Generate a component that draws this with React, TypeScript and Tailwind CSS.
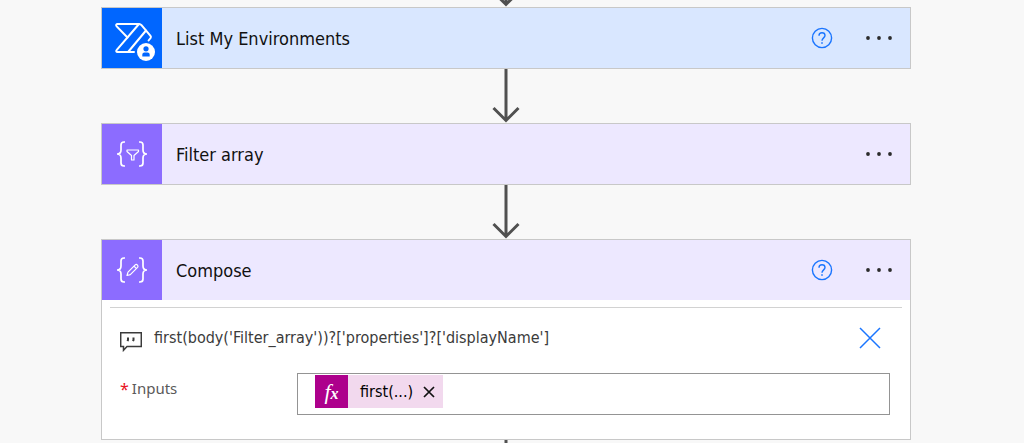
import type { ReactNode } from 'react';

type Tone = 'blue' | 'violet';

const TONES: Record<Tone, { header: string; tile: string }> = {
  blue: { header: 'bg-[#d9e7ff]', tile: 'bg-[#0066ff]' },
  violet: { header: 'bg-[#ede8ff]', tile: 'bg-[#8c6cff]' },
};

function EnvironmentsIcon() {
  return (
    <svg width="60" height="60" viewBox="0 0 60 60" fill="none" aria-hidden="true">
      <g stroke="#fff" strokeWidth="2" strokeLinejoin="round" strokeLinecap="round">
        <path d="M15.5 16H37Q38.5 16 39.5 17.2L48.5 27.8Q49.3 28.8 48.6 30L46.6 32.5" />
        <path d="M15.5 16C14 16 13.8 17.4 14.7 18.4L25.5 29.5" />
        <path d="M37 16L14.8 41.8C13.8 43 14.2 44 15.5 44H32" />
        <path d="M44 22.5L26.5 43.5" />
      </g>
      <circle cx="44" cy="44" r="10" fill="#0066ff" />
      <circle cx="44" cy="44" r="9" fill="#fff" />
      <circle cx="44" cy="40.8" r="2.6" fill="#0066ff" />
      <path d="M40.3 48.4V46.6a2.2 2.2 0 0 1 2.2-2.2h3a2.2 2.2 0 0 1 2.2 2.2v1.8z" fill="#0066ff" />
    </svg>
  );
}

function BracesIcon({ children }: { children: ReactNode }) {
  return (
    <svg width="60" height="60" viewBox="0 0 60 60" fill="none" stroke="#fff" aria-hidden="true">
      <path
        strokeWidth="1.7"
        d="M23 18H22Q19 18 19 21V26Q19 30 15 30Q19 30 19 34V39Q19 42 22 42H23M37 18H38Q41 18 41 21V26Q41 30 45 30Q41 30 41 34V39Q41 42 38 42H37"
      />
      {children}
    </svg>
  );
}

function FilterIcon() {
  return (
    <BracesIcon>
      <path strokeWidth="1.2" strokeLinejoin="round" d="M25 26H36.5V27.5L32 31.5V36H29.5V31.5L25 27.5Z" />
    </BracesIcon>
  );
}

function ComposeIcon() {
  return (
    <BracesIcon>
      <path
        strokeWidth="1.2"
        strokeLinejoin="round"
        d="M25 35.5L26 32.2L33.2 24.9Q34.3 24 35.5 25.1Q36.5 26.2 35.6 27.4L28.3 34.6ZM32 26.2L34.3 28.5"
      />
    </BracesIcon>
  );
}

function Arrow() {
  return (
    <svg
      className="shrink-0"
      width="28"
      height="54"
      viewBox="0 0 28 54"
      fill="none"
      stroke="#505050"
      strokeWidth="3"
      aria-hidden="true"
    >
      <path d="M14 0V51.5M1.5 39L14 51.5L26.5 39" />
    </svg>
  );
}

function HelpButton() {
  return (
    <button type="button" aria-label="Help" className="mr-8">
      <svg width="22" height="22" viewBox="0 0 22 22" fill="none" stroke="#1a75ff" strokeWidth="1.4">
        <circle cx="11" cy="11" r="9.6" />
        <path d="M8 8.8C8 6.8 9.2 5.8 11 5.8S14 6.9 14 8.5C14 10.8 11 11 11 13.8" />
        <path d="M11 15.2V16.8" strokeWidth="1.6" />
      </svg>
    </button>
  );
}

function MenuButton() {
  return (
    <button type="button" aria-label="Menu" className="mr-[17px]">
      <svg width="28" height="22" viewBox="0 0 28 22" fill="#2b2b2b">
        <circle cx="3" cy="11" r="1.9" />
        <circle cx="14" cy="11" r="1.9" />
        <circle cx="25" cy="11" r="1.9" />
      </svg>
    </button>
  );
}

function StepCard({
  title,
  tone,
  icon,
  help = false,
  children,
}: {
  title: string;
  tone: Tone;
  icon: ReactNode;
  help?: boolean;
  children?: ReactNode;
}) {
  return (
    <section className="w-full shrink-0 border border-[#c8c8c8] bg-white">
      <header className={`flex h-[60px] items-center ${TONES[tone].header}`}>
        <div className={`size-[60px] ${TONES[tone].tile}`}>{icon}</div>
        <h2 className="ml-3.5 flex-1 text-[18px] text-[#111]">{title}</h2>
        {help && <HelpButton />}
        <MenuButton />
      </header>
      {children}
    </section>
  );
}

function ExpressionToken() {
  return (
    <span className="flex h-[33px] shrink-0 items-center bg-[#f2d9ee] text-[16px] text-black">
      <span className="flex size-[33px] items-center justify-center bg-[#ad008c] font-['Liberation_Serif',serif] text-white italic">
        <span className="text-[22px] leading-6">f</span>
        <span className="pt-1 text-[16px] leading-6 font-bold">x</span>
      </span>
      <span className="ml-3">first(...)</span>
      <button type="button" aria-label="Remove first(...)" className="mr-2 ml-2.5">
        <svg width="12" height="12" viewBox="0 0 12 12" stroke="#111" strokeWidth="1.7">
          <path d="M1 1L11 11M11 1L1 11" />
        </svg>
      </button>
    </span>
  );
}

function ComposeBody() {
  return (
    <div className="px-2 pt-[7px] pb-6">
      <hr className="border-[#d2d2d2]" />
      <div className="flex h-[60px] items-center pr-[21px] pl-2">
        <svg className="mt-2 ml-0.5" width="22" height="20" viewBox="0 0 22 20" fill="none" stroke="#3b3b3b" strokeWidth="1.5" aria-hidden="true">
          <path d="M.7 .7H21.3V14.5H7L3.5 18.3V14.5H.7Z" />
          <path strokeWidth="2" d="M8 5.5V8L7.5 9.2M13.5 5.5V8L13 9.2" />
        </svg>
        <p className="ml-3 flex-1 text-[16px] text-[#3b3b3b]">
          first(body('Filter_array'))?['properties']?['displayName']
        </p>
        <button type="button" aria-label="Delete comment">
          <svg width="22" height="22" viewBox="0 0 22 22" stroke="#1a75ff" strokeWidth="1.5">
            <path d="M1 1L21 21M21 1L1 21" />
          </svg>
        </button>
      </div>
      <div className="mt-[5px] flex items-start pr-3 pl-2">
        <label
          htmlFor="inputs"
          className="mt-1 flex w-[179px] shrink-0 gap-[3px] pl-0.5 font-['Noto_Sans',sans-serif] text-[15px] text-[#5a5a5a]"
        >
          <span className="text-[16px] text-[#e81123]">*</span>
          Inputs
        </label>
        <div className="flex h-[42px] flex-1 items-start border border-[#949494] pt-px pr-2 pl-[17px]">
          <ExpressionToken />
          <input id="inputs" type="text" className="h-9 min-w-0 flex-1 px-2 outline-none" />
        </div>
      </div>
    </div>
  );
}

export default function App() {
  return (
    <main className="flex h-screen justify-center overflow-hidden bg-[#f8f8f8] pr-3 font-['DejaVu_Sans_Condensed','Noto_Sans',sans-serif]">
      <div className="flex w-full max-w-[810px] flex-col items-center">
        <div className="flex h-[7px] shrink-0 flex-col justify-end overflow-hidden">
          <Arrow />
        </div>
        <StepCard title="List My Environments" tone="blue" icon={<EnvironmentsIcon />} help />
        <Arrow />
        <StepCard title="Filter array" tone="violet" icon={<FilterIcon />} />
        <Arrow />
        <StepCard title="Compose" tone="violet" icon={<ComposeIcon />} help>
          <ComposeBody />
        </StepCard>
        <Arrow />
      </div>
    </main>
  );
}
